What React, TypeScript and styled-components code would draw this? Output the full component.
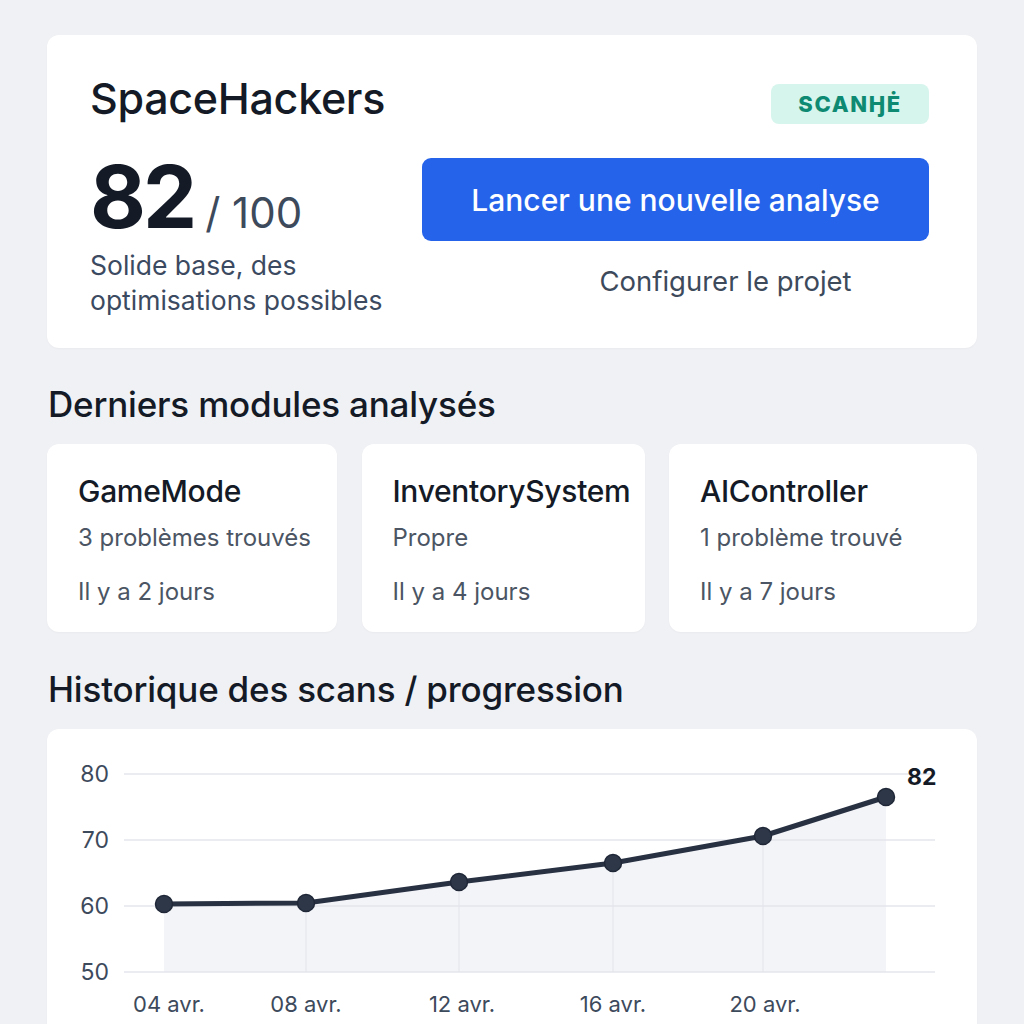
import React from "react";
import styled, { createGlobalStyle } from "styled-components";

const Global = createGlobalStyle`
  html, body { margin: 0; padding: 0; background: #f0f1f5; }
  body { font-family: Inter, "Noto Sans", "DejaVu Sans", sans-serif; color: #141a26; }
  * { box-sizing: border-box; }
`;

const Page = styled.div`
  padding: 35px 47px 0 47px;
  display: flex;
  flex-direction: column;
  height: 1024px;
  overflow: hidden;
`;

const Card = styled.div`
  background: #ffffff;
  border-radius: 12px;
  box-shadow: 0 1px 2px rgba(20, 26, 38, 0.03);
`;

const HeroCard = styled(Card)`
  padding: 38px 48px 30px 43px;
  display: flex;
  flex-direction: column;
`;

const HeroTop = styled.div`
  display: flex;
  justify-content: space-between;
  align-items: flex-start;
`;

const ProjectTitle = styled.h1`
  margin: 0;
  font-size: 43px;
  line-height: 50px;
  font-weight: 500;
  letter-spacing: -0.3px;
  color: #141a26;
`;

const Badge = styled.span`
  margin-top: 11px;
  width: 158px;
  height: 40px;
  border-radius: 8px;
  background: #d6f5ed;
  color: #0e8a73;
  font-size: 22px;
  font-weight: 800;
  letter-spacing: 1.6px;
  display: flex;
  align-items: center;
  justify-content: center;
`;

const HeroBody = styled.div`
  margin-top: 30px;
  display: grid;
  grid-template-columns: 332px 1fr;
`;

const ScoreCol = styled.div`
  display: flex;
  flex-direction: column;
`;

const ScoreLine = styled.div`
  display: flex;
  align-items: baseline;
  gap: 11px;
`;

const ScoreValue = styled.span`
  font-size: 86px;
  line-height: 86px;
  font-weight: 700;
  letter-spacing: -3px;
  color: #141a26;
`;

const ScoreMax = styled.span`
  font-size: 42px;
  font-weight: 400;
  color: #3d4a5c;
`;

const ScoreNote = styled.p`
  margin: 8px 0 0 0;
  font-size: 26.5px;
  line-height: 35px;
  color: #3b4a60;
`;

const ActionCol = styled.div`
  display: flex;
  flex-direction: column;
  padding-top: 4px;
`;

const PrimaryButton = styled.button`
  height: 83px;
  width: 100%;
  border: none;
  border-radius: 9px;
  background: #2563eb;
  color: #ffffff;
  font-family: inherit;
  font-size: 30px;
  font-weight: 500;
  cursor: pointer;
`;

const LinkButton = styled.a`
  margin-top: 24px;
  padding-left: 100px;
  text-align: center;
  font-size: 27.5px;
  line-height: 32px;
  color: #3d4a5c;
`;

const SectionTitle = styled.h2<{ $top: number }>`
  margin: ${(p) => p.$top}px 0 20px 1px;
  font-size: 35px;
  line-height: 40px;
  font-weight: 500;
  letter-spacing: -0.2px;
  color: #141a26;
`;

const ModuleGrid = styled.div`
  display: grid;
  grid-template-columns: 290px 283px 308px;
  column-gap: 24px;
  justify-content: space-between;
`;

const ModuleCard = styled(Card)`
  height: 188px;
  padding: 30px 16px 0 31px;
  display: flex;
  flex-direction: column;
`;

const ModuleName = styled.div`
  font-size: 30px;
  line-height: 34px;
  font-weight: 500;
  letter-spacing: -0.3px;
  color: #141a26;
  white-space: nowrap;
`;

const ModuleMeta = styled.div<{ $gap: number }>`
  margin-top: ${(p) => p.$gap}px;
  font-size: 24px;
  line-height: 30px;
  color: #4b5563;
`;

const ChartCard = styled(Card)`
  flex: 1;
  min-height: 320px;
  border-bottom-left-radius: 0;
  border-bottom-right-radius: 0;
`;

const ChartSvg = styled.svg`
  display: block;
  font-family: Inter, "Noto Sans", sans-serif;
`;

const modules = [
  { name: "GameMode", status: "3 problèmes trouvés", when: "Il y a 2 jours" },
  { name: "InventorySystem", status: "Propre", when: "Il y a 4 jours" },
  { name: "AIController", status: "1 problème trouvé", when: "Il y a 7 jours" },
];

const yTicks = [
  { label: "80", y: 45 },
  { label: "70", y: 111 },
  { label: "60", y: 177 },
  { label: "50", y: 243 },
];

const points: [number, number][] = [
  [117, 175],
  [259, 174],
  [412, 153],
  [566, 134],
  [716, 107],
  [839, 68],
];

const xLabels = [
  { label: "04 avr.", x: 122 },
  { label: "08 avr.", x: 259 },
  { label: "12 avr.", x: 415 },
  { label: "16 avr.", x: 566 },
  { label: "20 avr.", x: 718 },
];

function Chart() {
  const linePath = points
    .map(([x, y], i) => (i === 0 ? `M${x} ${y}` : `L${x} ${y}`))
    .join(" ");
  const areaPath = `${linePath} L839 243 L117 243 Z`;
  return (
    <ChartSvg width="930" height="300" viewBox="0 0 930 300">
      <path d={areaPath} fill="#f3f4f8" />
      {yTicks.map((t) => (
        <g key={t.label}>
          <line x1="77" x2="888" y1={t.y} y2={t.y} stroke="#e4e6ec" strokeWidth="1.5" />
          <text x="62" y={t.y + 8} textAnchor="end" fontSize="23" fill="#3d4a5c">
            {t.label}
          </text>
        </g>
      ))}
      {points.slice(1, 5).map(([x, y]) => (
        <line key={x} x1={x} x2={x} y1={y} y2="243" stroke="#e2e4ea" strokeWidth="1" />
      ))}
      <path d={linePath} fill="none" stroke="#283142" strokeWidth="5" strokeLinejoin="round" strokeLinecap="round" />
      {points.map(([x, y]) => (
        <circle key={x} cx={x} cy={y} r="8.5" fill="#2d3748" stroke="#202838" strokeWidth="1.5" />
      ))}
      <text x="860" y="56" fontSize="23" fontWeight="700" fill="#141a26">
        82
      </text>
      {xLabels.map((l) => (
        <text key={l.label} x={l.x} y="283" textAnchor="middle" fontSize="22" fill="#3d4a5c">
          {l.label}
        </text>
      ))}
    </ChartSvg>
  );
}

export default function App() {
  return (
    <>
      <Global />
      <Page>
        <HeroCard>
          <HeroTop>
            <ProjectTitle>SpaceHackers</ProjectTitle>
            <Badge>SCANӇĖ</Badge>
          </HeroTop>
          <HeroBody>
            <ScoreCol>
              <ScoreLine>
                <ScoreValue>82</ScoreValue>
                <ScoreMax>/ 100</ScoreMax>
              </ScoreLine>
              <ScoreNote>
                Solide base, des
                <br />
                optimisations possibles
              </ScoreNote>
            </ScoreCol>
            <ActionCol>
              <PrimaryButton>Lancer une nouvelle analyse</PrimaryButton>
              <LinkButton>Configurer le projet</LinkButton>
            </ActionCol>
          </HeroBody>
        </HeroCard>

        <SectionTitle $top={36}>Derniers modules analysés</SectionTitle>
        <ModuleGrid>
          {modules.map((m) => (
            <ModuleCard key={m.name}>
              <ModuleName>{m.name}</ModuleName>
              <ModuleMeta $gap={15}>{m.status}</ModuleMeta>
              <ModuleMeta $gap={24}>{m.when}</ModuleMeta>
            </ModuleCard>
          ))}
        </ModuleGrid>

        <SectionTitle $top={37}>Historique des scans / progression</SectionTitle>
        <ChartCard>
          <Chart />
        </ChartCard>
      </Page>
    </>
  );
}
